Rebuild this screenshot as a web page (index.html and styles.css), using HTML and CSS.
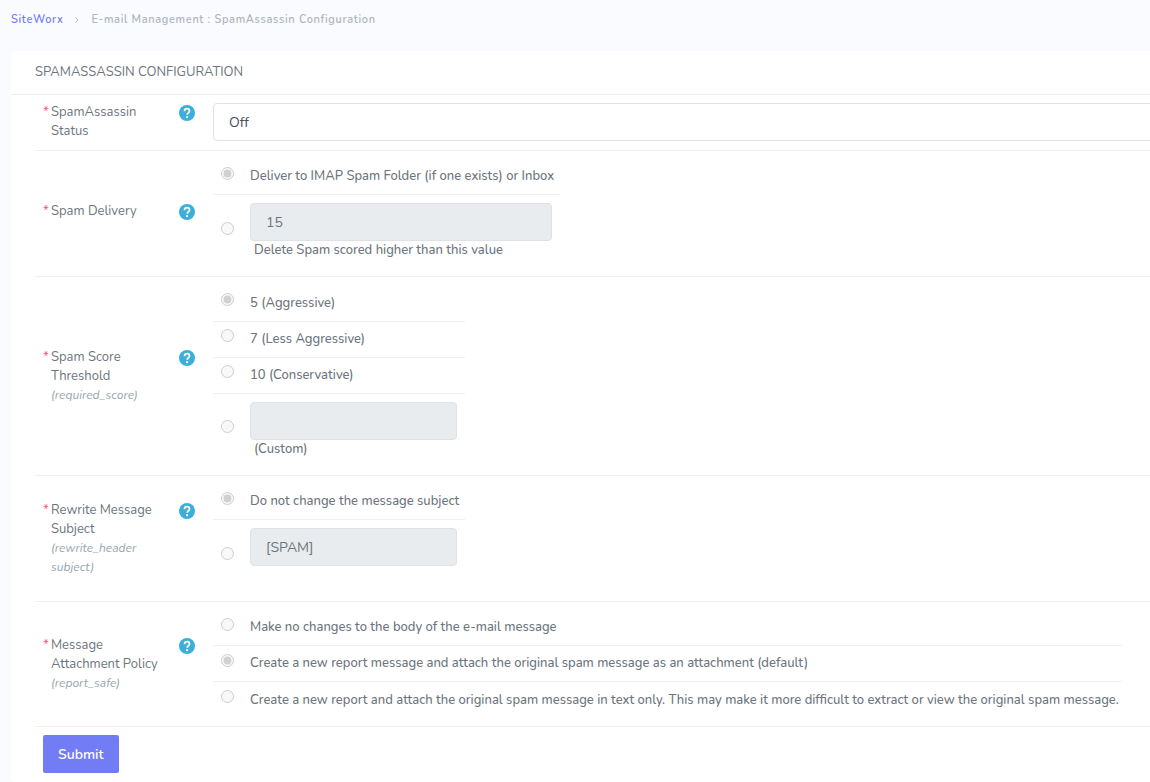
FILE: index.html
```html
<!DOCTYPE html>
<html lang="en">
<head>
    <meta charset="UTF-8">
    <meta name="viewport" content="width=device-width, initial-scale=1.0">
    <title>SpamAssassin Configuration</title>
    <link rel="stylesheet" href="styles.css">
</head>
<body>
    <svg class="none">
        <symbol id="icon-help" viewBox="0 0 16 16">
            <circle cx="8" cy="8" r="8" fill="#3bafda"/>
            <path d="M5.500 6.200C5.500 4.500 6.500 3.700 8 3.700s2.500.9 2.500 2.200c0 1.800-2.300 1.900-2.300 3.800" fill="none" stroke="#fff" stroke-width="1.700"/>
            <circle cx="8.100" cy="12.200" r="1.100" fill="#fff"/>
        </symbol>
    </svg>

    <nav class="breadcrumb" aria-label="Breadcrumb">
        <a href="#">SiteWorx</a>
        <svg class="breadcrumb-arrow" viewBox="0 0 4 6"><path d="M.5.5 3 3 .5 5.500" fill="none" stroke="#adb5bd"/></svg>
        <span>E-mail Management : SpamAssassin Configuration</span>
    </nav>

    <main class="card">
        <h1 class="card-title">SPAMASSASSIN CONFIGURATION</h1>

        <form class="config-form">
            <div class="form-row form-row-status">
                <div class="form-label">
                    <span class="required">*</span>
                    <label class="form-name" for="status">SpamAssassin Status</label>
                    <button type="button" class="help" aria-label="Help"><svg><use href="#icon-help"/></svg></button>
                </div>
                <select id="status" class="form-control">
                    <option>Off</option>
                    <option>On</option>
                </select>
            </div>

            <div class="form-row" role="group" aria-labelledby="delivery">
                <div class="form-label">
                    <span class="required">*</span>
                    <span class="form-name" id="delivery">Spam Delivery</span>
                    <button type="button" class="help" aria-label="Help"><svg><use href="#icon-help"/></svg></button>
                </div>
                <div class="options options-medium">
                    <div class="option">
                        <input type="radio" name="delivery" id="delivery-imap" checked disabled>
                        <label for="delivery-imap">Deliver to IMAP Spam Folder (if one exists) or Inbox</label>
                    </div>
                    <div class="option">
                        <input type="radio" name="delivery" id="delivery-delete" disabled>
                        <div class="option-custom">
                            <input type="text" class="form-control" value="15" aria-label="Score" disabled>
                            <label for="delivery-delete">Delete Spam scored higher than this value</label>
                        </div>
                    </div>
                </div>
            </div>

            <div class="form-row form-row-threshold" role="group" aria-labelledby="threshold">
                <div class="form-label">
                    <span class="required">*</span>
                    <span class="form-name" id="threshold">Spam Score Threshold <em>(required_score)</em></span>
                    <button type="button" class="help" aria-label="Help"><svg><use href="#icon-help"/></svg></button>
                </div>
                <div class="options options-small">
                    <div class="option">
                        <input type="radio" name="threshold" id="threshold-5" checked disabled>
                        <label for="threshold-5">5 (Aggressive)</label>
                    </div>
                    <div class="option">
                        <input type="radio" name="threshold" id="threshold-7" disabled>
                        <label for="threshold-7">7 (Less Aggressive)</label>
                    </div>
                    <div class="option">
                        <input type="radio" name="threshold" id="threshold-10" disabled>
                        <label for="threshold-10">10 (Conservative)</label>
                    </div>
                    <div class="option">
                        <input type="radio" name="threshold" id="threshold-custom" disabled>
                        <div class="option-custom">
                            <input type="text" class="form-control" aria-label="Custom score" disabled>
                            <label for="threshold-custom">(Custom)</label>
                        </div>
                    </div>
                </div>
            </div>

            <div class="form-row" role="group" aria-labelledby="rewrite">
                <div class="form-label">
                    <span class="required">*</span>
                    <span class="form-name" id="rewrite">Rewrite Message Subject <em>(rewrite_header subject)</em></span>
                    <button type="button" class="help" aria-label="Help"><svg><use href="#icon-help"/></svg></button>
                </div>
                <div class="options options-small">
                    <div class="option">
                        <input type="radio" name="rewrite" id="rewrite-no" checked disabled>
                        <label for="rewrite-no">Do not change the message subject</label>
                    </div>
                    <div class="option">
                        <input type="radio" name="rewrite" id="rewrite-yes" aria-label="Rewrite subject" disabled>
                        <div class="option-custom">
                            <input type="text" class="form-control" value="[SPAM]" aria-label="Subject prefix" disabled>
                        </div>
                    </div>
                </div>
            </div>

            <div class="form-row" role="group" aria-labelledby="policy">
                <div class="form-label">
                    <span class="required">*</span>
                    <span class="form-name" id="policy">Message Attachment Policy <em>(report_safe)</em></span>
                    <button type="button" class="help" aria-label="Help"><svg><use href="#icon-help"/></svg></button>
                </div>
                <div class="options options-large">
                    <div class="option">
                        <input type="radio" name="policy" id="policy-none" disabled>
                        <label for="policy-none">Make no changes to the body of the e-mail message</label>
                    </div>
                    <div class="option">
                        <input type="radio" name="policy" id="policy-attach" checked disabled>
                        <label for="policy-attach">Create a new report message and attach the original spam message as an attachment (default)</label>
                    </div>
                    <div class="option">
                        <input type="radio" name="policy" id="policy-text" disabled>
                        <label for="policy-text">Create a new report and attach the original spam message in text only. This may make it more difficult to extract or view the original spam message.</label>
                    </div>
                </div>
            </div>

            <button type="submit" class="btn-submit">Submit</button>
        </form>
    </main>
</body>
</html>
```
FILE: styles.css
```css
*,
*:before,
*:after {
    box-sizing: border-box;
}

body {
    margin: 0;
    min-height: 100vh;
    display: flex;
    flex-direction: column;
    overflow-x: hidden;
    background-color: #fafbfe;
    color: #6c757d;
    font-family: Nunito, "Open Sans", sans-serif;
    font-size: 13px;
    line-height: 19px;
}

.none {
    display: none;
}

.breadcrumb {
    display: flex;
    align-items: center;
    gap: 12px;
    padding: 10px 11px 22px;
    font-size: 11px;
    font-weight: 600;
    letter-spacing: 0.06em;
    color: #adb5bd;
}

.breadcrumb a {
    color: #727cf5;
    text-decoration: none;
}

.breadcrumb-arrow {
    width: 4px;
    height: 6px;
}

/* the card runs past the right edge of the window */
.card {
    flex: 1;
    margin: 0 -24px 0 11px;
    border-radius: 4px;
    background-color: #fff;
}

.card-title {
    margin: 0;
    padding: 12px 24px;
    border-bottom: 1px solid #ececf3;
    font-size: 13px;
    font-weight: 400;
}

.config-form {
    padding-left: 24px;
}

.form-row {
    display: grid;
    grid-template-columns: 152px 1fr;
    gap: 18px;
    align-items: center;
    padding: 8px;
    border-bottom: 1px solid #eef0f4;
}

.form-row-status {
    min-height: 56px;
    align-items: start;
}

.form-row-threshold {
    min-height: 199px;
}

.form-label {
    display: flex;
    align-items: flex-start;
}

.required {
    width: 8px;
    color: #fa5c7c;
}

.form-name {
    width: 110px;
}

.form-name em {
    display: block;
    font-size: 12px;
    color: #98a6ad;
}

.help {
    height: 24px;
    margin-left: auto;
    padding: 0 0 4px;
    border: 0;
    background: none;
    cursor: pointer;
}

.help svg {
    display: block;
    width: 16px;
    height: 16px;
}

.form-control {
    display: block;
    appearance: none;
    width: 100%;
    height: 38px;
    padding: 0 15px;
    border: 1px solid #dee2e6;
    border-radius: 4px;
    background-color: #fff;
    color: #495057;
    font-family: inherit;
    font-size: 14px;
}

.form-control:disabled {
    background-color: #e9ecef;
    color: #6c757d;
}

.options-small {
    width: 252px;
}

.options-medium {
    width: 347px;
}

.options-large {
    width: 909px;
}

.option {
    display: flex;
    align-items: center;
    gap: 16px;
    min-height: 36px;
    padding: 0 8px;
    border-bottom: 1px solid #eef0f4;
    font-weight: 500;
    white-space: nowrap;
}

.option:last-child {
    border-bottom: 0;
}

.option input[type="radio"] {
    flex: none;
    width: 13px;
    height: 13px;
    margin: 0 0 7px;
}

.option-custom {
    flex: 1;
    min-height: 73px;
    padding: 8px 0;
}

.option-custom label {
    display: block;
    padding-left: 4px;
}

.btn-submit {
    height: 38px;
    margin: 8px;
    padding: 0 15px;
    border: 0;
    border-radius: 2px;
    background-color: #727cf5;
    color: #fff;
    font-family: inherit;
    font-size: 14px;
    font-weight: 600;
    cursor: pointer;
}
```
